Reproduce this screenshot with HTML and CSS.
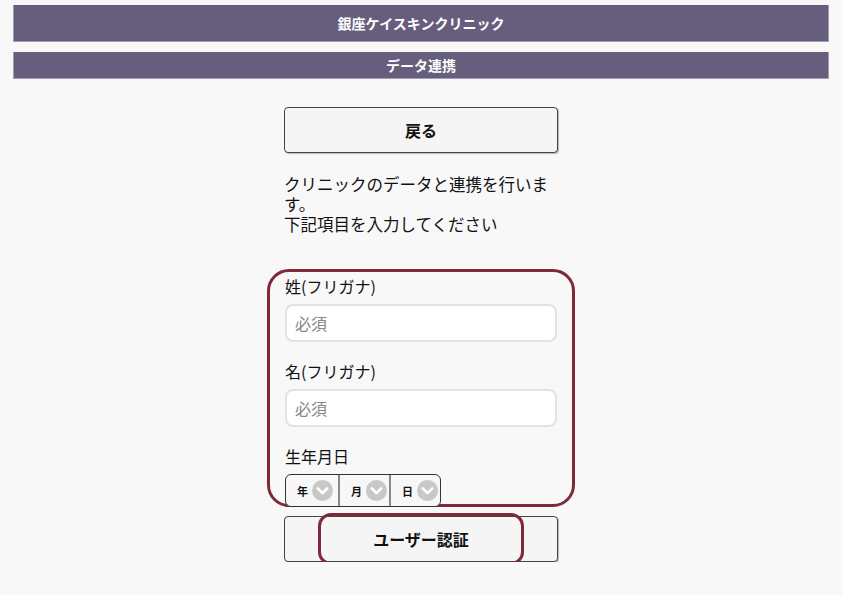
FILE: index.html
```html
<!DOCTYPE html>
<html lang="ja">
<head>
    <meta charset="UTF-8">
    <title>データ連携</title>
    <link rel="stylesheet" href="styles.css">
</head>
<body>
    <div class="bar bar-title">銀座ケイスキンクリニック</div>
    <div class="bar bar-sub">データ連携</div>

    <div class="container">
        <button class="btn btn-back" type="button">戻る</button>

        <p class="lead">クリニックのデータと連携を行います。<br>下記項目を入力してください</p>

        <form class="form-box" id="linkForm">
            <div class="form-group">
                <label>姓(フリガナ)</label>
                <input type="text" placeholder="必須">
            </div>
            <div class="form-group">
                <label>名(フリガナ)</label>
                <input type="text" placeholder="必須">
            </div>
            <div class="form-group last">
                <label>生年月日</label>
                <div class="date-select">
                    <div class="seg"><span>年</span><i class="chev"><svg viewBox="0 0 20 20"><path d="M5.5 8 L10 12.5 L14.5 8" /></svg></i></div>
                    <div class="seg"><span>月</span><i class="chev"><svg viewBox="0 0 20 20"><path d="M5.5 8 L10 12.5 L14.5 8" /></svg></i></div>
                    <div class="seg"><span>日</span><i class="chev"><svg viewBox="0 0 20 20"><path d="M5.5 8 L10 12.5 L14.5 8" /></svg></i></div>
                </div>
            </div>
        </form>

        <div class="submit-wrap">
            <button class="btn btn-submit" type="submit" form="linkForm">ユーザー認証</button>
            <span class="mark"></span>
        </div>
    </div>
</body>
</html>
```

FILE: styles.css
```css
body { margin: 0; padding-top: 5px; background: #f8f8f8; font-family: "Noto Sans CJK JP", "Noto Sans", sans-serif; color: #111; }
.bar { margin: 0 13px 10px; background: #665e7c; color: #fff; font-weight: bold; font-size: 14px; text-align: center; border: 1px solid #a29cb6; border-top: none; }
.bar-title { height: 36px; line-height: 36px; }
.bar-sub { height: 26px; line-height: 26px; }
.container { width: 274px; margin: 0 auto; padding-top: 18px; }
.btn { display: block; width: 100%; background: #f5f5f5; border: 1px solid #444; border-radius: 4px; box-shadow: 1px 1px 1px rgba(0,0,0,0.25); font-family: inherit; font-weight: bold; font-size: 16px; color: #111; cursor: pointer; }
.btn-back { height: 46px; }
.lead { margin: 21px 0 0; font-size: 16.5px; line-height: 20px; }
.form-box { margin: 35px -17px 0; padding: 3px 15px 0; height: 229px; border: 3px solid #7e2a3b; border-radius: 22px; }
.form-group { margin-bottom: 18px; }
.form-group label { display: block; font-size: 16px; line-height: 22px; margin-bottom: 7px; }
.form-group input { box-sizing: border-box; width: 100%; height: 38px; padding: 0 8px; border: 2px solid #e2e2e2; border-radius: 8px; background: #fff; font-family: inherit; font-size: 16px; }
.form-group input::placeholder { color: #888; }
.form-group.last { margin-bottom: 0; }
.date-select { display: inline-flex; height: 31px; border: 1px solid #333; border-radius: 6px; background: #f7f7f7; overflow: hidden; }
.seg { display: flex; align-items: center; width: 51px; padding-left: 11px; box-sizing: border-box; gap: 4px; border-left: 2px solid #888; }
.seg:first-child { border-left: none; width: 52px; }
.seg span { font-size: 11px; font-weight: bold; }
.chev { display: block; width: 21px; height: 21px; border-radius: 50%; background: #c8c8c8; }
.chev svg { display: block; width: 21px; height: 21px; fill: none; stroke: #fff; stroke-width: 2.6; stroke-linecap: round; stroke-linejoin: round; }
.submit-wrap { position: relative; margin-top: 9px; }
.btn-submit { height: 46px; }
.mark { position: absolute; left: 34px; top: -3px; width: 206px; height: 52px; box-sizing: border-box; border: 3px solid #7e2a3b; border-radius: 13px; pointer-events: none; }
```
